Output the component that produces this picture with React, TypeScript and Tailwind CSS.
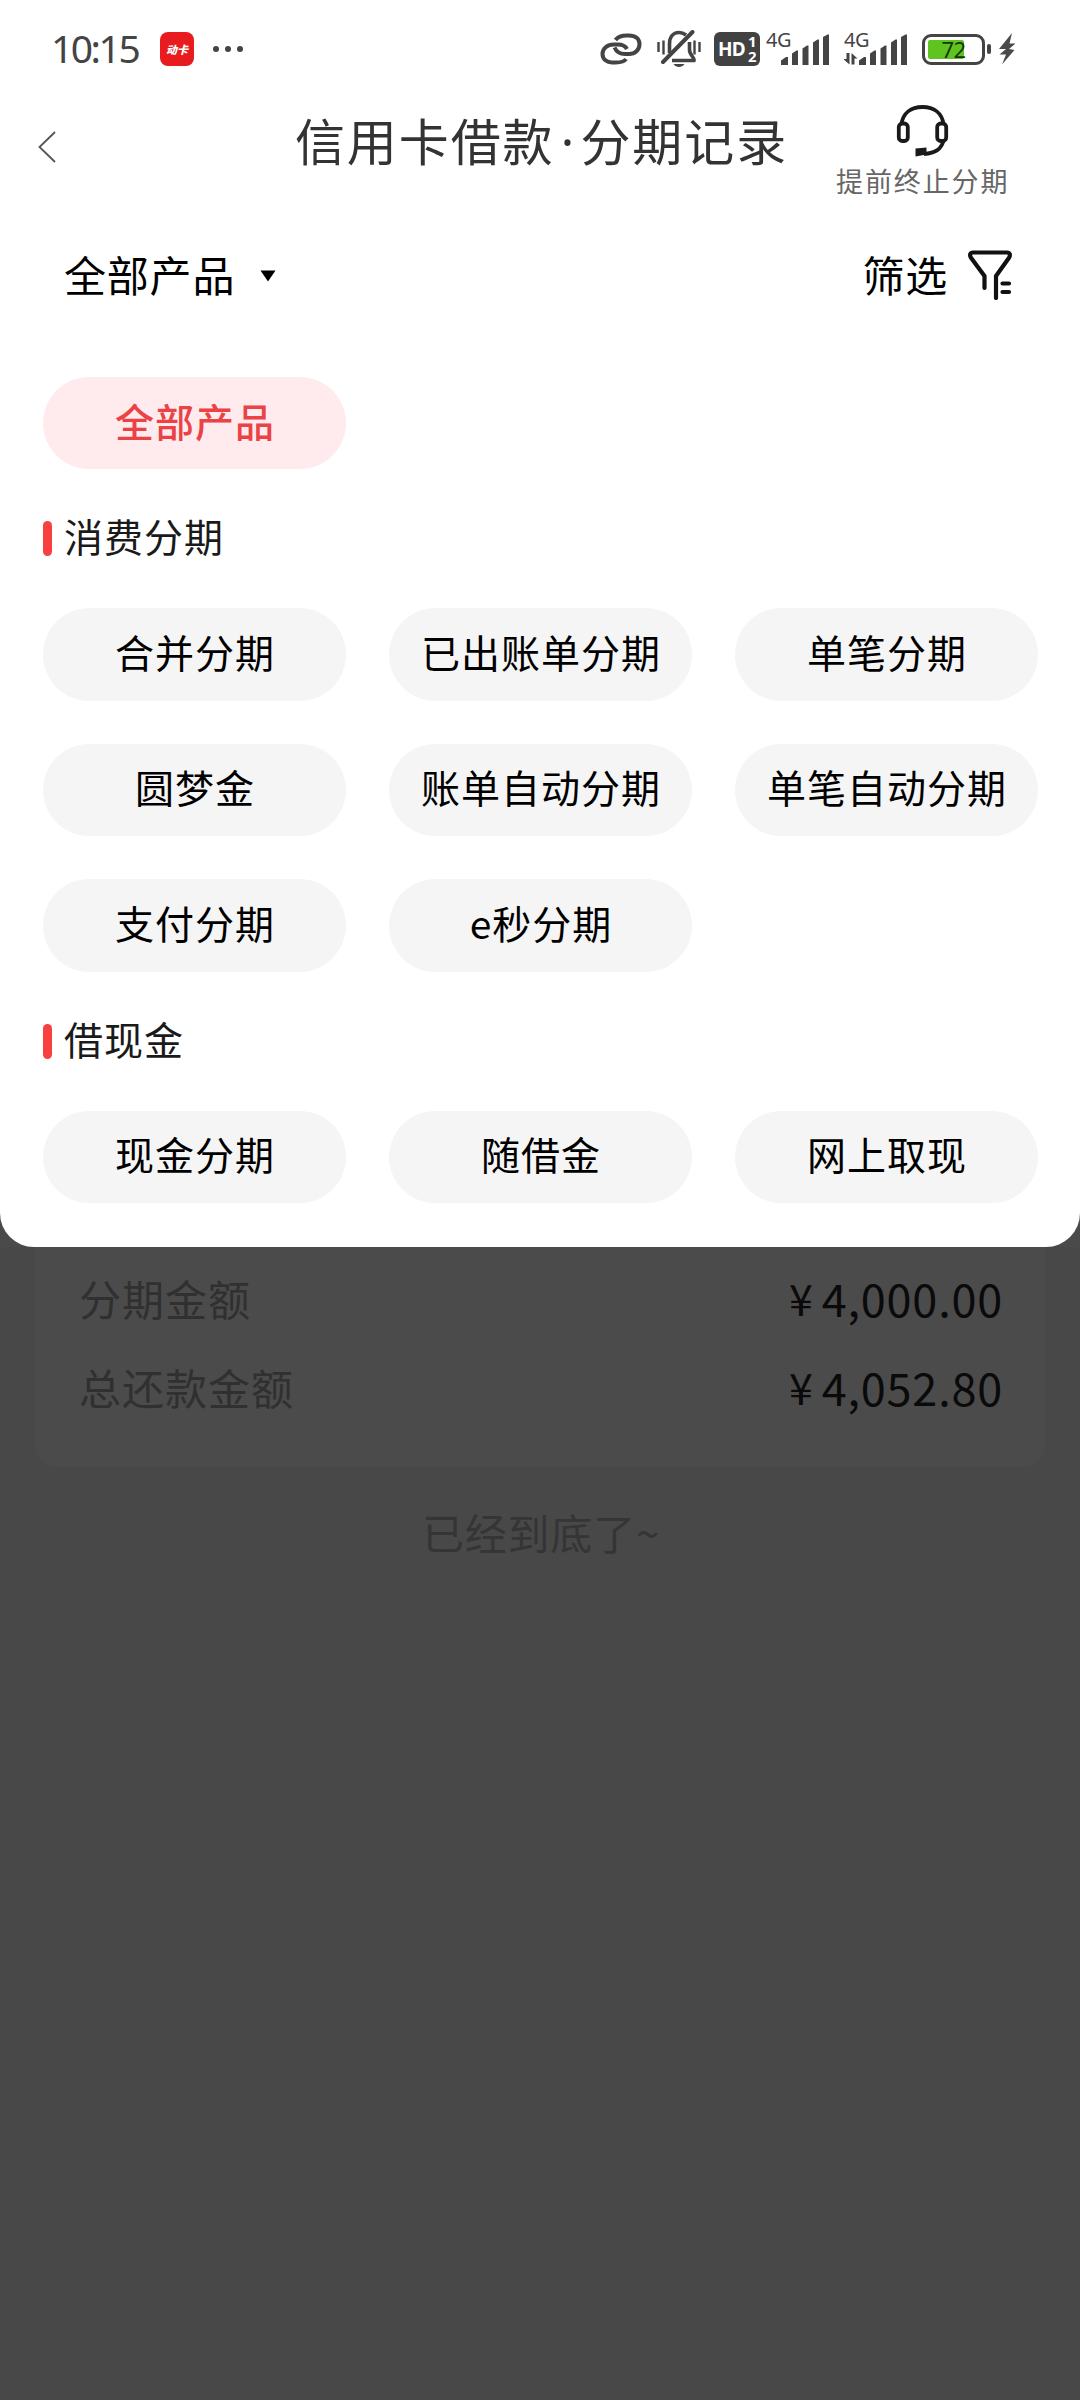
import type { ReactNode } from 'react';

const consumeProducts = [
  '合并分期',
  '已出账单分期',
  '单笔分期',
  '圆梦金',
  '账单自动分期',
  '单笔自动分期',
  '支付分期',
  'e秒分期',
];

const cashProducts = ['现金分期', '随借金', '网上取现'];

function LinkIcon() {
  return (
    <svg className="w-[42px] h-[34px] mr-[15px]" viewBox="0 0 42 34" fill="none" stroke="#444" strokeWidth="4">
      <path d="M15.5 8 C18 4.5 22 3.5 27 3.5 H29 C35.5 3.5 39.5 7 39.5 12 C39.5 18 35 22 29 22 H25 C20 22 16.5 20 14.5 15.5" />
      <path d="M27 17 C25 13.5 22 12.5 18 12.5 H14 C7 12.5 2.5 16.5 2.5 22 C2.5 27.5 7 30.5 12 30.5 H16 C21 30.5 24 30 26 27" />
    </svg>
  );
}

function BellOffIcon() {
  return (
    <svg className="w-[44px] h-[38px] mr-[13px]" viewBox="0 0 44 38" fill="none" stroke="#444" strokeWidth="3.6">
      <path d="M1.5 12 V22 M6.5 10.5 V24.5 M42.5 12 V22 M37.5 10.5 V24.5" strokeWidth="2.4" />
      <path d="M12.5 23 V14 C12.5 7 16 2.5 22 2.5 C25 2.5 27 3.5 29 5" />
      <path d="M32.5 12 V20 C32.5 25 38 28 37 30.5 H15" />
      <path d="M35.5 2 L6 32" strokeWidth="4" strokeLinecap="round" />
      <path d="M16.5 34 H27.5 C25 38 19 38 16.5 34 Z" fill="#444" stroke="none" />
    </svg>
  );
}

function HdIcon() {
  return (
    <div className="flex items-center w-[46px] h-[34px] rounded-[6px] bg-[#424242] pl-[4px] mr-[6px] font-bold text-white">
      <span className="w-[30px] text-[19px] leading-none tracking-[-0.8px]">HD</span>
      <span className="flex flex-col text-[15px] leading-[15px]">
        <span>1</span>
        <span>2</span>
      </span>
    </div>
  );
}

function SignalIcon({ data }: { data?: boolean }) {
  return (
    <div className="relative w-[70px] h-[34px] shrink-0">
      <span className="absolute left-0 top-0 text-[20px] leading-[15px] tracking-[-0.5px] text-[#444]">4G</span>
      <svg className="absolute left-0 top-0 w-[70px] h-[34px]" viewBox="0 0 70 34" fill="#444">
        <path d="M15 33 V28.5 L20 25 H22 V33 Z" />
        <path d="M26 33 V21.5 L30.5 18.5 H32 V33 Z" />
        <path d="M36.5 33 V16.5 L41 13.5 H42.5 V33 Z" />
        <path d="M47 33 V10.5 L51.5 7.5 H53 V33 Z" />
        <path d="M57 33 V5 L61.5 2.5 H63 V33 Z" />
        {data && <path d="M-1 27 H2.5 V21 H5.5 V32.5 Z M7.5 32.5 V21 L13.5 26.5 H10.5 V32.5 Z" />}
      </svg>
    </div>
  );
}

function BatteryIcon() {
  return (
    <div className="flex items-center">
      <div className="relative w-[63px] h-[31px] rounded-[9px] border-[3px] border-[#444] p-[3px]">
        <div className="w-[36px] h-full rounded-[2px] bg-[#5fc41f]" />
        <span className="absolute inset-0 flex items-center justify-center text-[22px] leading-none tracking-[-0.5px] text-[#16360a]">
          72
        </span>
      </div>
      <div className="w-[4px] h-[10px] ml-[2px] rounded-[2px] bg-[#444]" />
      <svg className="w-[18px] h-[32px] ml-[7px]" viewBox="0 0 18 32" fill="#4a4a4a">
        <path d="M14 0 L1 16 H8 L1.5 21.5 H8 L4 31.5 L16.5 17 L11 16 L17.5 10.5 H11.5 Z" />
      </svg>
    </div>
  );
}

function StatusBar() {
  return (
    <div className="flex items-center h-[98px] pl-[51px] font-['Noto_Sans','Noto_Sans_CJK_SC',sans-serif]">
      <span className="w-[109px] pb-[3px] text-[39px] leading-none tracking-[-2.5px] text-[#444]">10:15</span>
      <div className="flex items-center justify-center w-[34px] h-[34px] rounded-[8px] bg-[#e81c1f]">
        <span className="text-[11px] leading-none font-black italic text-white whitespace-nowrap">动卡</span>
      </div>
      <div className="flex gap-[6px] ml-[19px]">
        <span className="size-[6px] rounded-full bg-[#444]" />
        <span className="size-[6px] rounded-full bg-[#444]" />
        <span className="size-[6px] rounded-full bg-[#444]" />
      </div>
      <div className="flex items-center ml-auto pr-[64px]">
        <LinkIcon />
        <BellOffIcon />
        <HdIcon />
        <SignalIcon />
        <div className="w-[8px]" />
        <SignalIcon data />
        <div className="w-[8px]" />
        <BatteryIcon />
      </div>
    </div>
  );
}

function HeadsetIcon() {
  return (
    <svg className="w-[54px] h-[54px]" viewBox="0 0 54 54" fill="none" stroke="#1a1a1a" strokeWidth="3.8">
      <path d="M5.5 20 C7 9 15 3 26.5 3 C38 3 46 9 47.5 20" />
      <rect x="2.8" y="19.5" width="9" height="17.5" rx="3.5" />
      <rect x="41.2" y="19.5" width="9" height="17.5" rx="3.5" />
      <path d="M47.5 37 C45 45 40 49 28 50" />
      <path d="M19.5 44.5 L30.5 43.5 V50.5 L19.5 52.5 Z" fill="#1a1a1a" stroke="none" />
    </svg>
  );
}

function FilterIcon() {
  return (
    <svg
      className="w-[44px] h-[50px]"
      viewBox="0 0 44 50"
      fill="none"
      stroke="#111"
      strokeWidth="4.2"
      strokeLinecap="round"
      strokeLinejoin="round"
    >
      <path d="M16.5 38 V26 L2.8 7.5 C1.5 5 2 2.5 5 2.5 H39 C42 2.5 42.5 5 41.2 7.5 L28 26 V48" />
      <path d="M34.5 33.5 H41 M34.5 42 H41" />
    </svg>
  );
}

function NavBar() {
  return (
    <div className="relative flex justify-center h-[122px]">
      <svg
        className="absolute left-[38px] top-[33px] w-[18px] h-[32px]"
        viewBox="0 0 18 32"
        fill="none"
        stroke="#555"
        strokeWidth="1.8"
      >
        <path d="M17 1 L1.5 16 L17 31" />
      </svg>
      <h1 className="flex items-center h-[82px] pl-[3px] text-[50px] leading-none tracking-[1.9px] text-[#333]">
        <span>信用卡借款</span>
        <span className="size-[6px] mx-[10px] mt-[3px] flex items-center justify-center tracking-normal font-['Noto_Sans',sans-serif]">
          ·
        </span>
        <span>分期记录</span>
      </h1>
      <div className="absolute left-[836px] top-[6px] flex flex-col items-center">
        <HeadsetIcon />
        <span className="mt-[6px] text-[27px] leading-[34px] tracking-[1.9px] text-[#666]">提前终止分期</span>
      </div>
    </div>
  );
}

function FilterBar() {
  return (
    <div className="flex items-center h-[110px] pl-[64px] pr-[68px] text-[42px] leading-none tracking-[0.8px] text-black">
      <span className="pb-[3px]">全部产品</span>
      <svg className="w-[16px] h-[12px] ml-[25px] mt-[2px]" viewBox="0 0 16 12" fill="#000">
        <path d="M0.5 0.5 H15.5 L8 11.5 Z" />
      </svg>
      <span className="ml-auto mr-[20px] pb-[3px]">筛选</span>
      <FilterIcon />
    </div>
  );
}

function Chip({ active, children }: { active?: boolean; children: ReactNode }) {
  return (
    <button
      className={`flex items-center justify-center h-[92.3px] rounded-full pl-px text-[39px] leading-none tracking-[1px] whitespace-nowrap pb-[6px] ${
        active ? 'bg-[#ffebed] text-[#ea4245] font-medium' : 'bg-[#f5f5f5] text-black'
      }`}
    >
      {children}
    </button>
  );
}

function Section({ title, items }: { title: string; items: string[] }) {
  return (
    <section>
      <div className="flex items-center h-[139px]">
        <span className="w-[9px] h-[35px] rounded-full bg-[#f8403f]" />
        <h2 className="ml-[12px] text-[39px] leading-none tracking-[1px] text-[#1a1a1a] pb-[6px]">{title}</h2>
      </div>
      <div className="grid grid-cols-3 gap-[43.2px]">
        {items.map((item) => (
          <Chip key={item}>{item}</Chip>
        ))}
      </div>
    </section>
  );
}

function AmountRow({ label, value }: { label: string; value: string }) {
  return (
    <div className="flex items-center justify-between h-[89px]">
      <span className="text-[42px] leading-none tracking-[1px] text-[#303030]">{label}</span>
      <span className="flex items-center text-[45px] leading-none tracking-[0.8px] text-[#0a0a0a]">
        <span className="mr-[8px] text-[43px]">¥</span>
        {value}
      </span>
    </div>
  );
}

export default function App() {
  return (
    <div className="w-[1080px] h-[2400px] overflow-hidden bg-[#484848] font-['Noto_Sans_CJK_SC',sans-serif]">
      <div className="bg-[#4a4a4a]">
        <div className="h-[1247px] bg-white rounded-b-[34px]">
          <StatusBar />
          <NavBar />
          <FilterBar />
          <div className="pl-[43px] pr-[42px] pt-[47px]">
            <div className="grid grid-cols-3 gap-[43.2px]">
              <Chip active>全部产品</Chip>
            </div>
            <Section title="消费分期" items={consumeProducts} />
            <Section title="借现金" items={cashProducts} />
          </div>
        </div>
      </div>

      <div className="mx-[35px] h-[220px] pl-[44px] pr-[42px] pt-[6px] rounded-b-[22px] bg-[#4b4b4b]">
        <AmountRow label="分期金额" value="4,000.00" />
        <AmountRow label="总还款金额" value="4,052.80" />
      </div>
      <p className="mt-[34px] pl-[2px] text-center text-[42px] leading-[62px] tracking-[0.8px] text-[#353535]">已经到底了~</p>
    </div>
  );
}
